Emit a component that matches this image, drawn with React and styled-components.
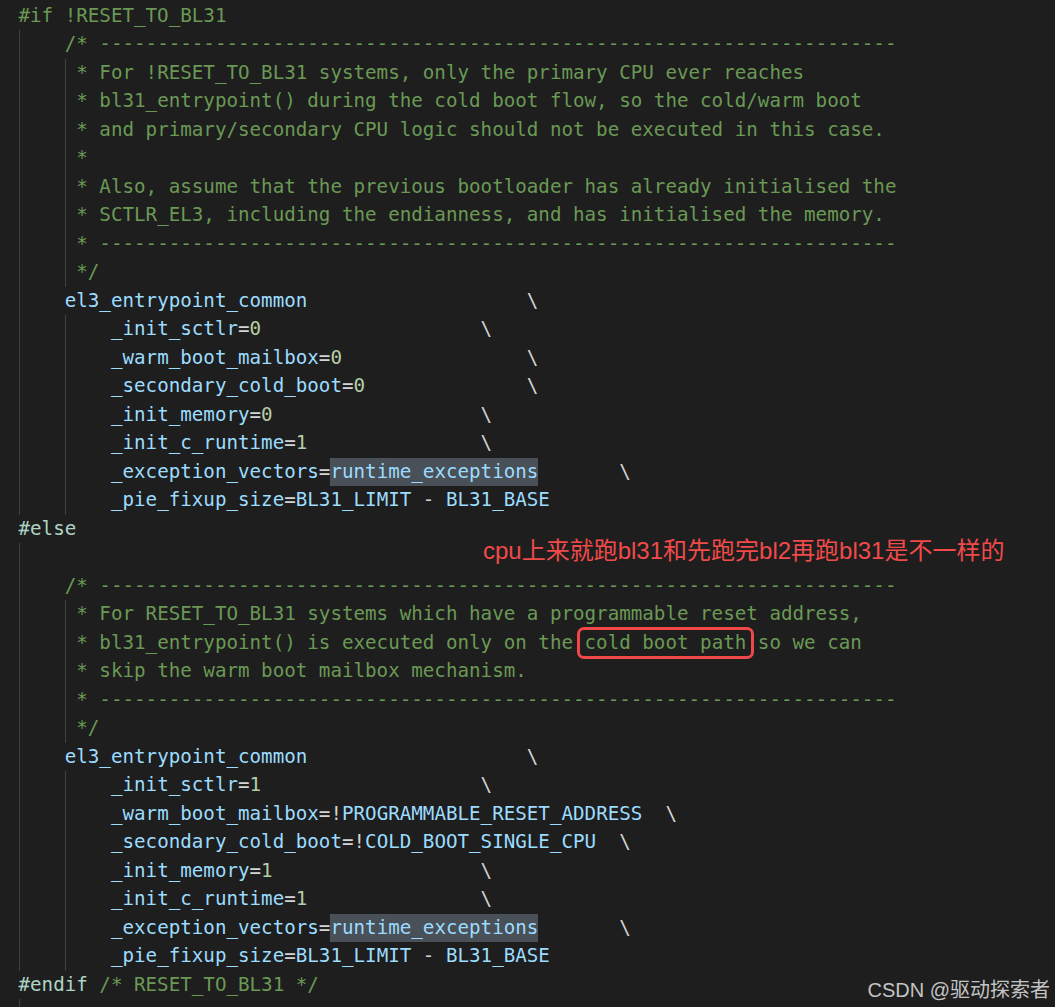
import styled, { createGlobalStyle } from "styled-components";

const CW = 19.2 * 0.60205;
const LINE = 28.5;
const DASHES = "-".repeat(69);

const GlobalStyle = createGlobalStyle`
  html, body {
    margin: 0;
    padding: 0;
    background: #1e1e1e;
  }
`;

const Editor = styled.div`
  position: relative;
  width: 1055px;
  height: 1007px;
  overflow: hidden;
  box-sizing: border-box;
  padding: 1.5px 0 0 18.5px;
  background: #1e1e1e;
  color: #d4d4d4;
  font-family: "DejaVu Sans Mono", "Liberation Mono", monospace;
  font-size: 19.2px;
`;

const Block = styled.div`
  background-image: linear-gradient(#404040, #404040);
  background-repeat: no-repeat;
  background-size: 1px 100%;
  background-position: ${(p) => (p.$col || 0) * CW}px 0;
`;

const Line = styled.div`
  height: ${LINE}px;
  line-height: ${LINE}px;
  white-space: pre;
`;

const Cm = styled.span`
  color: #6a9955;
`;

const Dir = styled.span`
  color: #6a9955;
`;

const Kw = styled.span`
  color: #add4c4;
`;

const Id = styled.span`
  color: #9cdcfe;
`;

const Op = styled.span`
  color: #d4d4d4;
`;

const Num = styled.span`
  color: #b5cea8;
`;

const Hl = styled.span`
  display: inline-block;
  vertical-align: top;
  height: ${LINE}px;
  line-height: ${LINE}px;
  background: #4a5058;
  color: #9cdcfe;
`;

const Boxed = styled.span`
  position: relative;

  &::after {
    content: "";
    position: absolute;
    left: -8px;
    right: -8px;
    top: -4px;
    bottom: -5px;
    border: 3px solid #f04848;
    border-radius: 7px;
  }
`;

const Note = styled.div`
  position: absolute;
  left: 483px;
  top: 539px;
  font-family: "Liberation Sans", "Noto Sans CJK SC", sans-serif;
  font-size: 24px;
  line-height: 1;
  color: #f04a4a;
  white-space: nowrap;
`;

const Watermark = styled.div`
  position: absolute;
  right: 5px;
  top: 980px;
  font-family: "Liberation Sans", "Noto Sans CJK SC", sans-serif;
  font-size: 20px;
  line-height: 1;
  color: #c4c4c4;
  white-space: nowrap;
`;

const sp = (n) => " ".repeat(Math.max(n, 1));

const Param = ({ name, value, col }) => {
  const used = 8 + name.length + 1 + value.length;
  const isNum = /^[0-9]$/.test(value);
  let rhs;
  if (isNum) rhs = <Num>{value}</Num>;
  else if (value === "runtime_exceptions") rhs = <Hl>{value}</Hl>;
  else if (value.startsWith("!"))
    rhs = (
      <>
        <Op>!</Op>
        <Id>{value.slice(1)}</Id>
      </>
    );
  else
    rhs = (
      <>
        <Id>BL31_LIMIT</Id>
        <Op> - </Op>
        <Id>BL31_BASE</Id>
      </>
    );
  return (
    <Line>
      {"        "}
      <Id>{name}</Id>
      <Op>=</Op>
      {rhs}
      {col ? <Op>{sp(col - used) + "\\"}</Op> : null}
    </Line>
  );
};

const Entry = () => (
  <Line>
    {"    "}
    <Id>el3_entrypoint_common</Id>
    <Op>{sp(44 - 25) + "\\"}</Op>
  </Line>
);

const CommentLine = ({ children }) => (
  <Line>
    {"     "}
    <Cm>{children}</Cm>
  </Line>
);

const firstParams = [
  ["_init_sctlr", "0", 40],
  ["_warm_boot_mailbox", "0", 44],
  ["_secondary_cold_boot", "0", 44],
  ["_init_memory", "0", 40],
  ["_init_c_runtime", "1", 40],
  ["_exception_vectors", "runtime_exceptions", 52],
  ["_pie_fixup_size", "BL31_LIMIT - BL31_BASE", 0],
];

const secondParams = [
  ["_init_sctlr", "1", 40],
  ["_warm_boot_mailbox", "!PROGRAMMABLE_RESET_ADDRESS", 56],
  ["_secondary_cold_boot", "!COLD_BOOT_SINGLE_CPU", 52],
  ["_init_memory", "1", 40],
  ["_init_c_runtime", "1", 40],
  ["_exception_vectors", "runtime_exceptions", 52],
  ["_pie_fixup_size", "BL31_LIMIT - BL31_BASE", 0],
];

export default function App() {
  return (
    <>
      <GlobalStyle />
      <Editor>
        <Line>
          <Dir>#if !RESET_TO_BL31</Dir>
        </Line>
        <Block>
          <Line>
            {"    "}
            <Cm>{"/* " + DASHES}</Cm>
          </Line>
          <Block $col={4}>
            <CommentLine>* For !RESET_TO_BL31 systems, only the primary CPU ever reaches</CommentLine>
            <CommentLine>* bl31_entrypoint() during the cold boot flow, so the cold/warm boot</CommentLine>
            <CommentLine>* and primary/secondary CPU logic should not be executed in this case.</CommentLine>
            <CommentLine>*</CommentLine>
            <CommentLine>* Also, assume that the previous bootloader has already initialised the</CommentLine>
            <CommentLine>* SCTLR_EL3, including the endianness, and has initialised the memory.</CommentLine>
            <CommentLine>{"* " + DASHES}</CommentLine>
            <CommentLine>*/</CommentLine>
          </Block>
          <Entry />
          <Block $col={4}>
            {firstParams.map(([n, v, c]) => (
              <Param key={n} name={n} value={v} col={c} />
            ))}
          </Block>
        </Block>
        <Line>
          <Kw>#else</Kw>
        </Line>
        <Block>
          <Line />
          <Line>
            {"    "}
            <Cm>{"/* " + DASHES}</Cm>
          </Line>
          <Block $col={4}>
            <CommentLine>* For RESET_TO_BL31 systems which have a programmable reset address,</CommentLine>
            <CommentLine>
              {"* bl31_entrypoint() is executed only on the "}
              <Boxed>cold boot path</Boxed>
              {" so we can"}
            </CommentLine>
            <CommentLine>* skip the warm boot mailbox mechanism.</CommentLine>
            <CommentLine>{"* " + DASHES}</CommentLine>
            <CommentLine>*/</CommentLine>
          </Block>
          <Entry />
          <Block $col={4}>
            {secondParams.map(([n, v, c]) => (
              <Param key={n} name={n} value={v} col={c} />
            ))}
          </Block>
        </Block>
        <Line>
          <Kw>#endif</Kw>
          <Cm> /* RESET_TO_BL31 */</Cm>
        </Line>
        <Block>
          <Line />
        </Block>
        <Note>cpu上来就跑bl31和先跑完bl2再跑bl31是不一样的</Note>
        <Watermark>CSDN @驱动探索者</Watermark>
      </Editor>
    </>
  );
}
